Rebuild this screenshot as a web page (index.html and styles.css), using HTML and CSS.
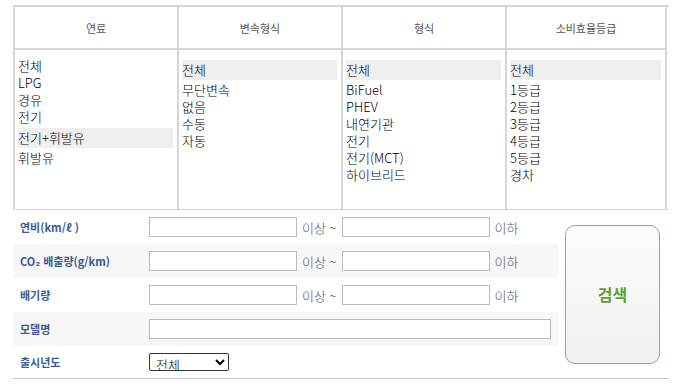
FILE: index.html
```html
<!DOCTYPE html>
<html lang="ko">
<head>
    <meta charset="UTF-8">
    <meta name="viewport" content="width=device-width, initial-scale=1.0">
    <title>자동차 연비 검색</title>
    <link rel="stylesheet" href="styles.css">
</head>
<body>
    <div id="wrap">
        <!-- 분류 선택 -->
        <div class="filters">
            <div class="col">
                <div class="col-head">연료</div>
                <div class="col-body">
                    <div class="item">전체</div>
                    <div class="item">LPG</div>
                    <div class="item">경유</div>
                    <div class="item">전기</div>
                    <div class="item on">전기+휘발유</div>
                    <div class="item">휘발유</div>
                </div>
            </div>
            <div class="col">
                <div class="col-head">변속형식</div>
                <div class="col-body">
                    <div class="item on">전체</div>
                    <div class="item">무단변속</div>
                    <div class="item">없음</div>
                    <div class="item">수동</div>
                    <div class="item">자동</div>
                </div>
            </div>
            <div class="col">
                <div class="col-head">형식</div>
                <div class="col-body">
                    <div class="item on">전체</div>
                    <div class="item">BiFuel</div>
                    <div class="item">PHEV</div>
                    <div class="item">내연기관</div>
                    <div class="item">전기</div>
                    <div class="item">전기(MCT)</div>
                    <div class="item">하이브리드</div>
                </div>
            </div>
            <div class="col last">
                <div class="col-head">소비효율등급</div>
                <div class="col-body">
                    <div class="item on">전체</div>
                    <div class="item">1등급</div>
                    <div class="item">2등급</div>
                    <div class="item">3등급</div>
                    <div class="item">4등급</div>
                    <div class="item">5등급</div>
                    <div class="item">경차</div>
                </div>
            </div>
        </div>

        <!-- 상세 조건 -->
        <div class="search">
            <div class="rows">
                <div class="row">
                    <div class="label">연비(km/ℓ )</div>
                    <input type="text" class="box">
                    <span class="unit">이상 ~</span>
                    <input type="text" class="box">
                    <span class="unit">이하</span>
                </div>
                <div class="row alt">
                    <div class="label">CO₂ 배출량(g/km)</div>
                    <input type="text" class="box">
                    <span class="unit">이상 ~</span>
                    <input type="text" class="box">
                    <span class="unit">이하</span>
                </div>
                <div class="row">
                    <div class="label">배기량</div>
                    <input type="text" class="box">
                    <span class="unit">이상 ~</span>
                    <input type="text" class="box">
                    <span class="unit">이하</span>
                </div>
                <div class="row alt">
                    <div class="label">모델명</div>
                    <input type="text" class="box wide">
                </div>
                <div class="row end">
                    <div class="label">출시년도</div>
                    <select class="year">
                        <option>전체</option>
                    </select>
                </div>
            </div>
            <div class="btn-cell">
                <button type="button" class="btn-search">검색</button>
            </div>
        </div>
    </div>
</body>
</html>
```

FILE: styles.css
```css
body {
    margin: 0;
    padding: 0;
    background: #fff;
    font-family: "Noto Sans CJK KR", sans-serif;
    font-size: 13px;
    font-weight: 300;
    color: #000;
}
#wrap {
    width: 656px;
    margin: 5px 0 0 13px;
}
.filters {
    display: flex;
    border-top: 2px solid #d6d6d6;
    border-bottom: 1px solid #d6d6d6;
}
.col {
    width: 164px;
    border-left: 2px solid #d6d6d6;
    box-sizing: border-box;
}
.col.last {
    width: 162px;
    border-right: 2px solid #d6d6d6;
}
.col-head {
    height: 41px;
    line-height: 43px;
    text-align: center;
    font-size: 11px;
    font-weight: 400;
    color: #555;
    border-bottom: 2px solid #d6d6d6;
}
.col-body {
    height: 159px;
    padding: 7px 4px 0 3px;
    box-sizing: border-box;
}
.item {
    height: 17px;
    line-height: 17px;
    white-space: nowrap;
}
.item.on {
    height: 20px;
    line-height: 20px;
    margin: 3px 0 1px;
    background: #efefef;
}
.search {
    display: flex;
    border-bottom: 1px solid #c8c8c8;
}
.rows {
    width: 545px;
}
.row {
    display: flex;
    align-items: center;
    height: 34px;
}
.row.alt {
    background: #f7f7f7;
}
.row.end {
    height: 32px;
}
.label {
    width: 129px;
    padding-left: 7px;
    font-size: 11px;
    font-weight: bold;
    color: #3a5b96;
}
.box {
    width: 148px;
    height: 20px;
    margin: 0;
    padding: 0 3px;
    box-sizing: border-box;
    border: 1px solid #bbb;
    background: #fff;
    font-size: 13px;
}
.box.wide {
    width: 402px;
}
.unit {
    margin: 0 5px;
    color: #555;
}
.year {
    width: 80px;
    height: 18px;
    margin: 0;
    padding: 0 2px;
    font-family: "Noto Sans CJK KR", sans-serif;
    font-size: 13px;
    font-weight: 300;
    border: 1px solid #333;
    border-radius: 2px;
    background: #fff;
}
.btn-cell {
    flex: 1;
    display: flex;
    align-items: center;
    padding-left: 7px;
}
.btn-search {
    width: 95px;
    height: 139px;
    border: 1px solid #8fae7a;
    border-radius: 10px;
    background: linear-gradient(#fdfdfd, #f0f0f0);
    font-family: "Noto Sans CJK KR", sans-serif;
    font-size: 16px;
    font-weight: bold;
    color: #5fa12e;
    cursor: pointer;
}
```
